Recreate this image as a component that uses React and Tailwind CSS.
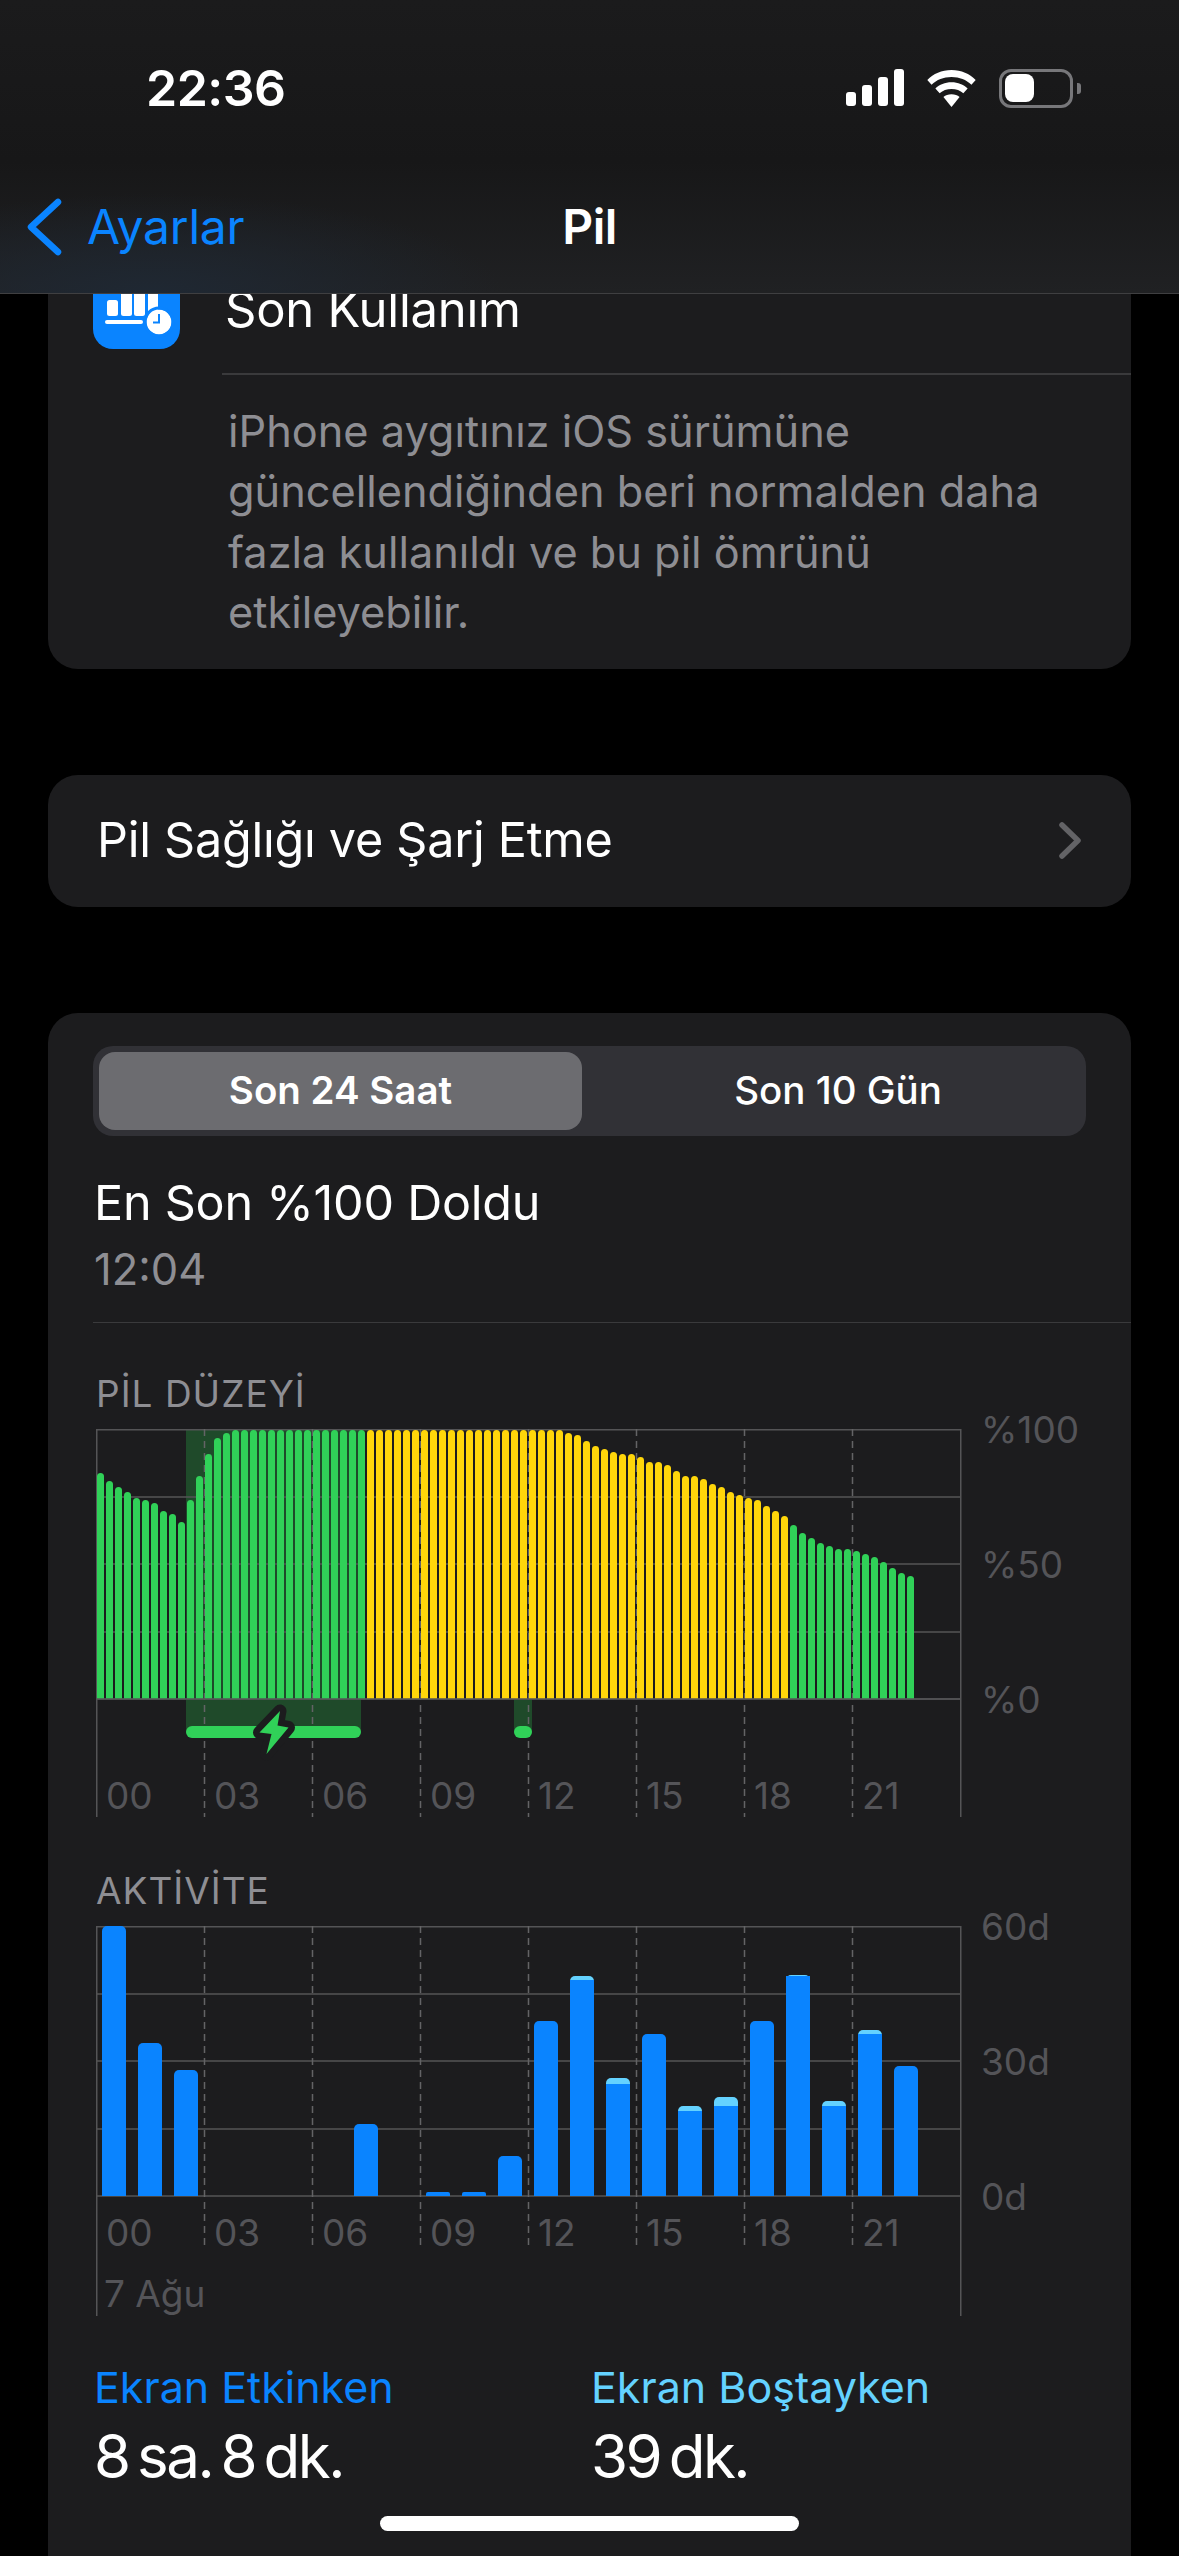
import React from "react";

const font = { fontFamily: "Inter, 'Noto Sans', sans-serif" };

// bar tops measured from the chart, as offsets from the chart top (0 = full, 270 = empty)
const batteryTops = [
  44, 52, 58, 63, 69, 71, 74, 82, 85, 93, 71, 47, 25, 9, 4,
  1, 1, 1, 1, 1, 1, 1, 1, 1, 1, 1, 1, 1, 1, 1,
  1, 1, 1, 1, 1, 1, 1, 1, 1, 1, 1, 1, 1, 1, 1, 1, 1, 1, 1, 1, 1, 1,
  4, 6, 12, 17, 20, 23, 25, 25, 28, 33, 33, 36, 42, 47, 47, 50, 55, 58, 63, 66, 69, 71, 77, 82, 87,
  96, 104, 109, 114, 117, 120, 120, 122, 125, 128, 133, 139, 144, 147,
];

const activityBars = [
  { i: 0, top: 0 }, { i: 1, top: 117 }, { i: 2, top: 144 }, { i: 7, top: 198 },
  { i: 9, top: 266 }, { i: 10, top: 266 }, { i: 11, top: 230 }, { i: 12, top: 95 },
  { i: 13, top: 50, dark: 54 }, { i: 14, top: 152, dark: 158 }, { i: 15, top: 108 },
  { i: 16, top: 180, dark: 185 }, { i: 17, top: 171, dark: 180 }, { i: 18, top: 95 },
  { i: 19, top: 49, dark: 50 }, { i: 20, top: 175, dark: 180 }, { i: 21, top: 104, dark: 108 },
  { i: 22, top: 140 },
];

const hours = ["00", "03", "06", "09", "12", "15", "18", "21"];
const dashes = [108, 216, 324, 432, 540, 648, 756];

function Grid({ bottom }) {
  return (
    <g stroke="#545456" strokeWidth="1.5">
      <path d={`M0.75 0V${bottom}M864.75 0V${bottom}`} fill="none" />
      {[0.75, 68, 135, 203, 270].map((y) => (
        <line key={y} x1="0" x2="865" y1={y} y2={y} />
      ))}
    </g>
  );
}

function Hours({ dashEnd, labelY }) {
  return (
    <>
      {dashes.map((x) => (
        <line key={x} x1={x + 0.5} x2={x + 0.5} y1="0" y2={dashEnd} stroke="#636366" strokeWidth="1.5" strokeDasharray="7 5" />
      ))}
      {hours.map((h, idx) => (
        <text key={h} x={10 + idx * 108} y={labelY} fontSize="37" fill="#545458" style={font}>{h}</text>
      ))}
    </>
  );
}

function BatteryChart() {
  return (
    <svg width="1000" height="390" className="block overflow-visible">
      <rect x="90" y="0" width="175" height="303" fill="#1f4a2a" />
      <rect x="418" y="270" width="18" height="33" fill="#1f4a2a" />
      <Grid bottom="388" />
      <Hours dashEnd="388" labelY="380" />
      {batteryTops.map((top, i) => {
        const yellow = i >= 30 && i <= 76;
        const x = 1 + i * 9;
        return <path key={i} d={`M${x} 270V${top + 3.5}a3.5 3.5 0 0 1 7 0V270Z`} fill={yellow ? "#ffd60a" : "#30d158"} />;
      })}
      <line x1="0" x2="865" y1="270" y2="270" stroke="#545456" strokeWidth="1.5" />
      <rect x="90" y="297" width="175" height="12" rx="6" fill="#30d158" />
      <rect x="418" y="297" width="18" height="12" rx="6" fill="#30d158" />
      <path d="M184 282 L163.500 303.500 L175.500 305 L170.500 325 L192.500 298.500 L181.500 296.500 Z" fill="#30d158" stroke="#1c1c1e" strokeWidth="13" strokeLinejoin="round" paintOrder="stroke" />
      <text x="885" y="14" fontSize="37" fill="#545458" style={font}>%100</text>
      <text x="885" y="149" fontSize="37" fill="#545458" style={font}>%50</text>
      <text x="885" y="284" fontSize="37" fill="#545458" style={font}>%0</text>
    </svg>
  );
}

function ActivityChart() {
  return (
    <svg width="1000" height="390" className="block overflow-visible">
      <Grid bottom="390" />
      <Hours dashEnd="323" labelY="320" />
      {activityBars.map((b) => {
        const x = 6 + b.i * 36;
        return (
          <g key={b.i}>
            {b.dark !== undefined && <path d={`M${x} ${270}V${b.top + 5}a5 5 0 0 1 5 -5h14a5 5 0 0 1 5 5V270Z`} fill="#64d2ff" />}
            <path
              d={b.dark !== undefined
                ? `M${x} 270V${b.dark}h24V270Z`
                : b.top > 260
                  ? `M${x} 270V${b.top + 2}a2 2 0 0 1 2 -2h20a2 2 0 0 1 2 2V270Z`
                  : `M${x} 270V${b.top + 5}a5 5 0 0 1 5 -5h14a5 5 0 0 1 5 5V270Z`}
              fill="#0a84ff"
            />
          </g>
        );
      })}
      <text x="8" y="381" fontSize="37" fill="#545458" style={font}>7 Ağu</text>
      <text x="885" y="14" fontSize="37" fill="#545458" style={font}>60d</text>
      <text x="885" y="149" fontSize="37" fill="#545458" style={font}>30d</text>
      <text x="885" y="284" fontSize="37" fill="#545458" style={font}>0d</text>
    </svg>
  );
}

function StatusIcons() {
  return (
    <div className="flex items-center gap-[22px]">
      <svg width="58" height="38" viewBox="0 0 58 38">
        <rect x="0" y="23" width="10" height="14" rx="3" fill="#fff" />
        <rect x="16" y="16" width="10" height="21" rx="3" fill="#fff" />
        <rect x="32" y="8" width="10" height="29" rx="3" fill="#fff" />
        <rect x="48" y="0" width="10" height="37" rx="3" fill="#fff" />
      </svg>
      <svg width="51" height="37" viewBox="0 0 53 39">
        <path d="M26.5 0C16 0 7.5 4 1 10.500l4.500 5C11 10.500 18 7.500 26.500 7.500S42 10.500 47.500 15.500l4.500-5C45.500 4 37 0 26.500 0Z" fill="#fff" />
        <path d="M26.500 13C19.500 13 14 15.500 9.500 19.500l4.500 5c3.300-3 7.500-4.500 12.500-4.500s9.200 1.500 12.500 4.500l4.500-5C39 15.500 33.500 13 26.500 13Z" fill="#fff" />
        <path d="M26.500 25.500c-3.500 0-6.300 1-8.500 3L26.500 39 35 28.500c-2.200-2-5-3-8.500-3Z" fill="#fff" />
      </svg>
      <div className="flex items-center gap-[4px]">
        <div className="w-[74px] h-[39px] rounded-[12px] border-[3px] border-[#77777a] px-[3px] py-[2.500px]">
          <div className="w-[29px] h-full rounded-[8px] bg-white" />
        </div>
        <div className="w-[4px] h-[11px] rounded-r-[3px] bg-[#77777a]" />
      </div>
    </div>
  );
}

export default function App() {
  return (
    <div className="relative w-[1179px] h-[2556px] overflow-hidden bg-black text-white" style={font}>
      {/* scrolled content, top of the first card sits under the nav */}
      <div className="flex flex-col pt-[250px] px-[48px]">
        <div className="bg-[#1c1c1e] rounded-[30px]">
          <div className="flex items-center h-[123px] pl-[45px]">
            <div className="w-[87px] h-[87px] rounded-[20px] bg-[#0a84ff] mb-[12px]">
              <svg width="87" height="87" viewBox="0 0 87 87">
                <rect x="14" y="38" width="11" height="16" rx="2.500" fill="#fff" />
                <rect x="28" y="24" width="11" height="30" rx="2.500" fill="#fff" />
                <rect x="41" y="14" width="11" height="40" rx="2.500" fill="#fff" />
                <rect x="55" y="20" width="10" height="34" rx="2.500" fill="#fff" />
                <rect x="12" y="58" width="38" height="4" rx="2" fill="#fff" />
                <circle cx="66" cy="60" r="12.500" fill="#fff" />
                <circle cx="66" cy="60" r="14" fill="none" stroke="#0a84ff" strokeWidth="3" />
                <path d="M66 52v8.500h-6" fill="none" stroke="#0a84ff" strokeWidth="2" />
              </svg>
            </div>
            <div className="ml-[45px] text-[49px] tracking-[-0.25px] mb-[3px]">Son Kullanım</div>
          </div>
          <div className="ml-[174px] h-[1.5px] bg-[#3a3a3c]" />
          <div className="pl-[180px] pr-[60px] pt-[26px] pb-[26px] text-[43.300px] leading-[60.500px] text-[#8e8e93]">
            iPhone aygıtınız iOS sürümüne güncellendiğinden beri normalden daha fazla kullanıldı ve bu pil ömrünü etkileyebilir.
          </div>
        </div>

        <div className="mt-[106px] h-[132px] bg-[#1c1c1e] rounded-[30px] flex items-center justify-between pl-[49px] pr-[50px]">
          <div className="text-[48.500px] tracking-[-0.25px]">Pil Sağlığı ve Şarj Etme</div>
          <svg width="22" height="37" viewBox="0 0 22 37" fill="none">
            <path d="M3 3l16 15.500L3 34" stroke="#636366" strokeWidth="5.500" strokeLinecap="round" strokeLinejoin="round" />
          </svg>
        </div>

        <div className="mt-[106px] bg-[#1c1c1e] rounded-t-[30px] h-[1600px]">
          <div className="mt-[33px] mx-[45px] flex h-[90px] rounded-[20px] bg-[#313136] p-[6px]">
            <div className="w-[483px] rounded-[16px] bg-[#6c6c70] flex items-center justify-center text-[38.500px] font-semibold">Son 24 Saat</div>
            <div className="flex-1 flex items-center justify-center pl-[14px] text-[38.500px] font-medium">Son 10 Gün</div>
          </div>
          <div className="pl-[46px] mt-[35px] text-[48.500px] tracking-[-0.25px] leading-[64px]">En Son %100 Doldu</div>
          <div className="pl-[46px] mt-[5px] text-[43.500px] leading-[58px] text-[#8e8e93]">12:04</div>
          <div className="ml-[45px] mt-[24px] h-[1.5px] bg-[#3a3a3c]" />
          <div className="pl-[48px] mt-[48px] text-[37px] leading-[46px] text-[#8e8e93] tracking-[1px]">PİL DÜZEYİ</div>
          <div className="pl-[48px] mt-[12px]"><BatteryChart /></div>
          <div className="pl-[48px] mt-[49px] text-[37px] leading-[46px] text-[#8e8e93] tracking-[1px]">AKTİVİTE</div>
          <div className="pl-[48px] mt-[12px]"><ActivityChart /></div>
          <div className="flex pl-[46px] mt-[43px]">
            <div className="w-[497px]">
              <div className="text-[43px] leading-[56px] text-[#0a84ff]">Ekran Etkinken</div>
              <div className="text-[60px] leading-[72px] tracking-[-2.500px] mt-[5px]">{"8\u2009sa.\u20098\u2009dk."}</div>
            </div>
            <div>
              <div className="text-[43px] leading-[56px] text-[#64d2ff]">Ekran Boştayken</div>
              <div className="text-[60px] leading-[72px] tracking-[-2.500px] mt-[5px]">{"39\u2009dk."}</div>
            </div>
          </div>
        </div>
      </div>

      {/* nav bar lies over the scrolled content */}
      <div className="absolute top-0 left-0 w-full h-[294px] border-b border-[#3f3f41] bg-[radial-gradient(ellipse_at_13%_100%,#1f2833_0%,rgba(31,40,51,0)_24%),linear-gradient(180deg,#1b1b1c_0%,#171718_55%,#202123_100%)]">
        <div className="flex items-center justify-between pl-[146px] pr-[98px] h-[176px]">
          <div className="text-[50px] font-semibold tracking-[-0.5px]">22:36</div>
          <StatusIcons />
        </div>
        <div className="relative flex items-center justify-center h-[52px] mt-[25px]">
          <div className="absolute left-[25px] top-0 flex items-center gap-[24px] h-full text-[#0a84ff]">
            <svg width="38" height="58" viewBox="0 0 38 58" fill="none">
              <path d="M33 4L6 29l27 25" stroke="#0a84ff" strokeWidth="6.500" strokeLinecap="round" strokeLinejoin="round" />
            </svg>
            <span className="text-[48px] tracking-[-0.25px]">Ayarlar</span>
          </div>
          <div className="text-[48px] font-semibold tracking-[-0.5px]">Pil</div>
        </div>
      </div>

      <div className="absolute bottom-[25px] left-[380px] w-[419px] h-[15px] rounded-full bg-white" />
    </div>
  );
}
